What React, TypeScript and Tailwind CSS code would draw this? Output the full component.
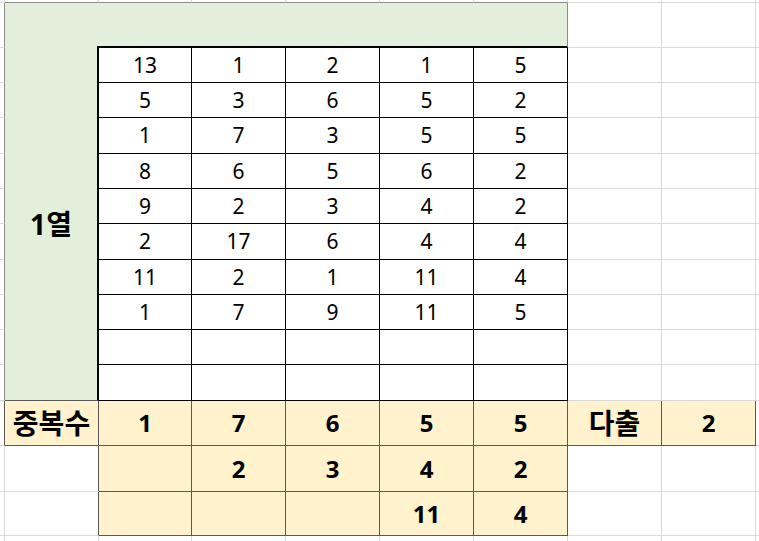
const data: (number | '')[][] = [
  [13, 1, 2, 1, 5],
  [5, 3, 6, 5, 2],
  [1, 7, 3, 5, 5],
  [8, 6, 5, 6, 2],
  [9, 2, 3, 4, 2],
  [2, 17, 6, 4, 4],
  [11, 2, 1, 11, 4],
  [1, 7, 9, 11, 5],
  ['', '', '', '', ''],
  ['', '', '', '', ''],
]

const counts = [1, 7, 6, 5, 5]

const extra: (number | '')[][] = [
  ['', 2, 3, 4, 2],
  ['', '', '', 11, 4],
]

// plain sheet cell with light gridlines
function Blank() {
  return <div className="border-r border-b border-[#d9d9d9]" />
}

function Edge() {
  return <div className="border-b border-[#d9d9d9]" />
}

export default function App() {
  return (
    <div className="h-[541px] w-[759px] overflow-hidden bg-white font-['Noto_Sans','Noto_Sans_CJK_KR',sans-serif] text-black">
      <div className="grid h-full grid-cols-[5px_94px_93px_94px_94px_94px_94px_94px_94px_1fr] grid-rows-[3px_45px_35px_35px_36px_35px_35px_36px_35px_35px_35px_36px_45px_46px_44px_1fr]">
        {/* row above the green block */}
        <Blank />
        {[0, 1, 2, 3, 4, 5].map((i) => (
          <div key={i} className="border-r border-b border-r-[#d9d9d9] border-b-[#8c8c8c]" />
        ))}
        <Blank />
        <Blank />
        <Edge />

        {/* green header band */}
        <div className="border-r border-b border-r-[#8c8c8c] border-b-[#d9d9d9]" />
        <div className="bg-[#e2efda]" />
        <div className="col-span-5 -ml-[2px] border-r border-b-2 border-r-[#8c8c8c] border-b-black bg-[#e2efda]" />
        <Blank />
        <Blank />
        <Edge />

        {/* data rows */}
        {data.map((row, r) => (
          <div key={r} className="contents">
            <div className="border-r border-b border-r-[#8c8c8c] border-b-[#d9d9d9]" />
            {r === 0 && (
              <div className="row-span-10 flex items-center justify-center border-r-2 border-b border-r-black border-b-[#595959] bg-[#e2efda] text-[28px] font-bold">
                1열
              </div>
            )}
            {row.map((v, c) => (
              <div
                key={c}
                className="flex items-center justify-center border-r border-b border-black bg-white pt-px text-[21px]"
              >
                {v}
              </div>
            ))}
            <Blank />
            <Blank />
            <Edge />
          </div>
        ))}

        {/* duplicate counts */}
        <div className="border-r border-b border-r-[#595959] border-b-[#d9d9d9]" />
        <div className="flex items-center justify-center border-r border-b border-[#595959] bg-[#fff2cc] text-[28px] font-bold">
          중복수
        </div>
        {counts.map((v, c) => (
          <div
            key={c}
            className="flex items-center justify-center border-r border-b border-[#595959] bg-[#fff2cc] text-[24px] font-bold"
          >
            {v}
          </div>
        ))}
        <div className="flex items-center justify-center border-r border-b border-[#595959] bg-[#fff2cc] text-[28px] font-bold">
          다출
        </div>
        <div className="flex items-center justify-center border-r border-b border-[#595959] bg-[#fff2cc] text-[24px] font-bold">
          2
        </div>
        <Edge />

        {extra.map((row, r) => (
          <div key={r} className="contents">
            <Blank />
            <div className="border-r border-b border-r-[#595959] border-b-[#d9d9d9]" />
            {row.map((v, c) => (
              <div
                key={c}
                className="flex items-center justify-center border-r border-b border-[#595959] bg-[#fff2cc] text-[24px] font-bold"
              >
                {v}
              </div>
            ))}
            <Blank />
            <Blank />
            <Edge />
          </div>
        ))}

        {/* partly visible last row */}
        <div className="border-r border-[#d9d9d9]" />
        {[0, 1, 2, 3, 4, 5, 6, 7].map((i) => (
          <div key={i} className="border-r border-[#d9d9d9]" />
        ))}
        <div />
      </div>
    </div>
  )
}
